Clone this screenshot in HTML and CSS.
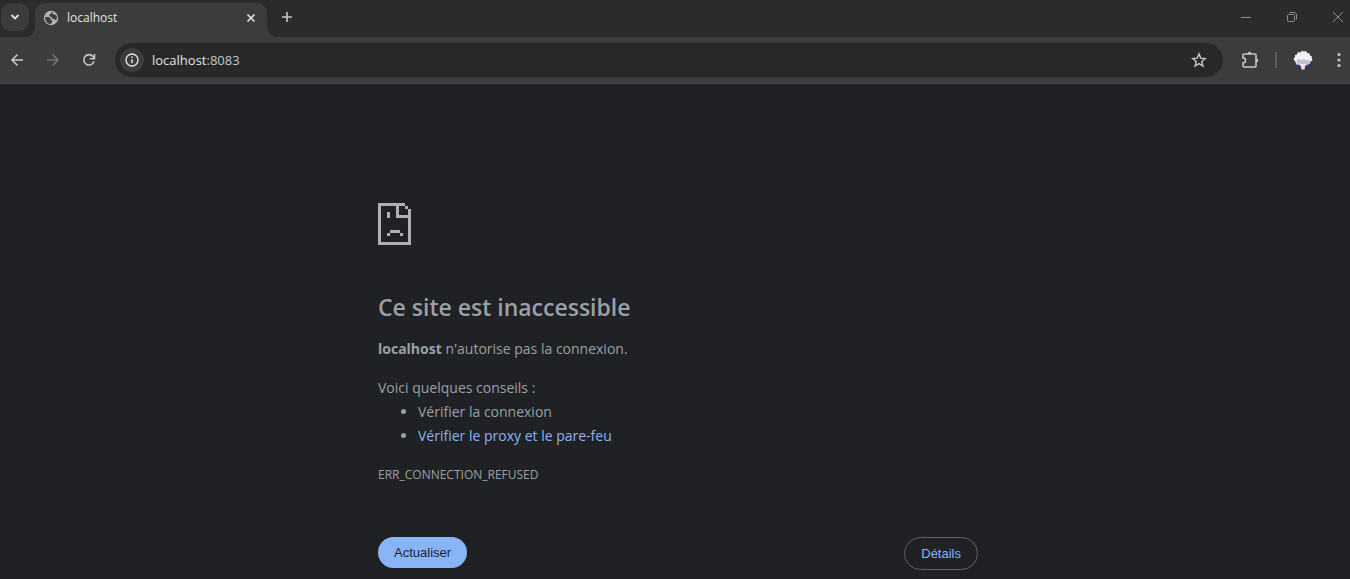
FILE: index.html
```html
<!DOCTYPE html>
<html lang="fr">
<head>
<meta charset="utf-8">
<title>localhost</title>
<link rel="stylesheet" href="styles.css">
</head>
<body>
<header class="browser">
  <div class="tabstrip">
    <button class="tab-search" aria-label="Rechercher dans les onglets"><svg width="10" height="10" viewBox="0 0 10 10"><path d="M1.500 3 5 6.500 8.500 3" fill="none" stroke="currentColor" stroke-width="1.800"/></svg></button>
    <div class="tab">
      <svg class="favicon" width="16" height="16" viewBox="0 0 16 16"><circle cx="8" cy="8" r="7.200" fill="#b4b4b4"/><path d="M2.200 7h3.600l1.800 1.600v1.700h1.700v1.500l-1.600 2.300C4.600 14 2 11.300 2.200 7zM8 2.200l2 .2-.4 1.800 2.200.4 1.800 1.200c.6 2 .3 3.400-.6 4.700L11.300 9H9.500L8.800 7.200 6.500 6.500V4.300L8.200 4z" fill="#3c3c3c"/></svg>
      <span class="tab-title">localhost</span>
      <button class="tab-close" aria-label="Fermer"><svg width="10" height="10" viewBox="0 0 10 10"><path d="m1.500 1.500 7 7m0-7-7 7" stroke="currentColor" stroke-width="1.600"/></svg></button>
    </div>
    <button class="new-tab" aria-label="Nouvel onglet"><svg width="12" height="12" viewBox="0 0 12 12"><path d="M6 1v10M1 6h10" stroke="currentColor" stroke-width="1.600"/></svg></button>
    <div class="window-controls">
      <button aria-label="Réduire"><svg width="12" height="12" viewBox="0 0 12 12"><path d="M1 6.500h10" stroke="currentColor"/></svg></button>
      <button aria-label="Restaurer"><svg width="12" height="12" viewBox="0 0 12 12"><rect x="1.500" y="3.500" width="7" height="7" rx="1" fill="none" stroke="currentColor"/><path d="M3.500 1.500H8A2.500 2.500 0 0 1 10.500 4v4.500" fill="none" stroke="currentColor"/></svg></button>
      <button aria-label="Fermer la fenêtre"><svg width="12" height="12" viewBox="0 0 12 12"><path d="m1 1 10 10M11 1 1 11" stroke="currentColor"/></svg></button>
    </div>
  </div>
  <div class="toolbar">
    <nav class="nav">
      <button aria-label="Précédent"><svg width="14" height="14" viewBox="0 0 14 14"><path d="M13 7H2m5.500-5.500L2 7l5.500 5.500" fill="none" stroke="currentColor" stroke-width="1.600"/></svg></button>
      <button class="dim" aria-label="Suivant"><svg width="14" height="14" viewBox="0 0 14 14"><path d="M1 7h11M6.500 1.500 12 7l-5.500 5.500" fill="none" stroke="currentColor" stroke-width="1.600"/></svg></button>
      <button aria-label="Recharger"><svg width="14" height="14" viewBox="0 0 14 14"><path d="M12 8.300A5.200 5.200 0 1 1 11 3.500L12.500 5M12.500 1v4.700H7.800" fill="none" stroke="currentColor" stroke-width="1.600"/></svg></button>
    </nav>
    <div class="omnibox">
      <button class="site-info" aria-label="Informations sur le site"><svg width="14" height="14" viewBox="0 0 14 14"><circle cx="7" cy="7" r="6" fill="none" stroke="currentColor" stroke-width="1.400"/><path d="M7 6.300v4M7 3.500V5" stroke="currentColor" stroke-width="1.500"/></svg></button>
      <div class="url" role="textbox" aria-label="Adresse">localhost<span class="port">:8083</span></div>
      <button class="star" aria-label="Ajouter aux favoris"><svg width="16" height="16" viewBox="0 0 16 16"><path d="m8 1.800 1.700 4.300 4.600.4-3.500 3 1.100 4.500L8 11.600 4.100 14l1.100-4.500-3.500-3 4.600-.4z" fill="none" stroke="currentColor" stroke-width="1.400"/></svg></button>
    </div>
    <div class="actions">
      <button aria-label="Extensions"><svg width="18" height="18" viewBox="0 0 18 18"><path d="M3 3h11a1 1 0 0 1 1 1v11a1 1 0 0 1-1 1H3a1 1 0 0 1-1-1v-3a2.300 2.300 0 0 0 0-5V4a1 1 0 0 1 1-1z" fill="none" stroke="currentColor" stroke-width="1.600"/><path d="M6.500 2.700a2 2 0 0 1 4 0zM15.300 7.500a2 2 0 0 1 0 4z" fill="currentColor"/></svg></button>
      <span class="divider"></span>
      <button aria-label="Profil"><svg width="20" height="20" viewBox="0 0 20 20"><circle cx="10" cy="10.500" r="9" fill="#33377c"/><path d="m.5 9 1.500-2L2 5l2-.5L5 2l2.500.5L9 .500l2 1.200 2-1L14 3l2.500.2.500 2.300 2 1-.3 2 .8 2-2 1-1 2.500-13 .5-1-2.500z" fill="#f2f2f4"/><path d="M3.500 10.500 6.500 9l2 1.500L11 9l2.500 1.500L16 9.500l1 2.500-1.500 2.500-3 1h-5L4 14z" fill="#c9bdcc"/><path d="m6 13.500 3 .5 4.500-.5-1.500 3-.5 3h-3L8 16.500z" fill="#f5e6e3"/></svg></button>
      <button class="menu" aria-label="Menu"><svg width="4" height="16" viewBox="0 0 4 16" fill="currentColor"><circle cx="2" cy="2.500" r="1.600"/><circle cx="2" cy="8" r="1.600"/><circle cx="2" cy="13.500" r="1.600"/></svg></button>
    </div>
  </div>
</header>
<main class="page">
  <div class="error">
    <svg class="sad" width="33" height="42" viewBox="0 0 11 14" shape-rendering="crispEdges" fill="currentColor"><path d="M0 0h9v1H7v3h4v10H0zM1 1v12h9V5H6V1zM9 1h1v1H9zM10 2h1v2h-1zM3 3h1v2H3zM4 9h3.330v1H4zM3 10h1v1H3zM7.330 10h1v1h-1z" fill-rule="evenodd"/></svg>
    <h1>Ce site est inaccessible</h1>
    <p><strong>localhost</strong> n'autorise pas la connexion.</p>
    <div class="tips">
      <p>Voici quelques conseils :</p>
      <ul>
        <li>Vérifier la connexion</li>
        <li><a href="#proxy">Vérifier le proxy et le pare-feu</a></li>
      </ul>
    </div>
    <div class="code">ERR_CONNECTION_REFUSED</div>
    <div class="buttons">
      <button class="primary">Actualiser</button>
      <button class="secondary">Détails</button>
    </div>
  </div>
</main>
</body>
</html>
```
FILE: styles.css
```css
* { box-sizing: border-box; }
body {
  margin: 0;
  min-height: 100vh;
  background: #202124;
  color: #9aa0a6;
  font-family: "Segoe UI", "Open Sans", "Noto Sans", sans-serif;
  font-size: 14px;
  line-height: 24px;
}
button {
  display: flex;
  align-items: center;
  justify-content: center;
  padding: 0;
  border: 0;
  background: none;
  color: inherit;
}
.browser { color: #c7c7c7; }
.tabstrip {
  display: flex;
  height: 37px;
  background: #2b2b2b;
}
.tab-search {
  width: 28px;
  height: 28px;
  margin: 3px 6px 0 1px;
  border-radius: 10px;
  background: #3c3c3c;
  color: #e3e3e3;
}
.tab {
  position: relative;
  display: flex;
  align-items: center;
  width: 232px;
  margin-top: 3px;
  padding: 0 10px 5px 8px;
  border-radius: 10px 10px 0 0;
  background: #3c3c3c;
}
.tab::before,
.tab::after {
  content: "";
  position: absolute;
  bottom: 0;
  width: 10px;
  height: 10px;
}
.tab::before {
  right: 100%;
  background: radial-gradient(circle at 0 0, #2b2b2b 10px, #3c3c3c 10px);
}
.tab::after {
  left: 100%;
  background: radial-gradient(circle at 100% 0, #2b2b2b 10px, #3c3c3c 10px);
}
.tab-title {
  flex: 1;
  margin-left: 8px;
  color: #e3e3e3;
  font-size: 12px;
  line-height: 16px;
}
.tab-close { width: 12px; height: 16px; color: #e3e3e3; }
.new-tab { width: 28px; height: 28px; margin: 3px 0 0 6px; }
.window-controls {
  display: flex;
  gap: 34px;
  margin-left: auto;
  padding: 11px 6px 0 0;
  height: 23px;
  color: #8c8c8c;
}
.toolbar {
  display: flex;
  align-items: center;
  height: 47px;
  border-bottom: 1px solid #4b4b4b;
  background: #3c3c3c;
}
.nav { display: flex; gap: 22px; padding: 0 19px 0 10px; }
.dim { color: #747474; }
.omnibox {
  display: flex;
  flex: 1;
  align-items: center;
  height: 34px;
  margin-right: 18px;
  padding: 0 16px 0 5px;
  border-radius: 17px;
  background: #282828;
}
.site-info {
  width: 24px;
  height: 24px;
  border-radius: 50%;
  background: #3c3c3c;
  color: #e3e3e3;
}
.url { flex: 1; padding-left: 8px; color: #e3e3e3; font-size: 13px; }
.port { color: #c7c7c7; }
.actions { display: flex; align-items: center; padding-right: 9px; }
.divider { width: 2px; height: 16px; margin: 0 16px; background: #5c5c5c; }
.menu { margin-left: 24px; }
.page { padding: 119px 0 9px 6px; }
.error { width: 600px; max-width: 100%; margin: 0 auto; }
.sad { display: block; color: #b0b0b0; }
h1 {
  margin: 48px 0 16px;
  font-size: 23px;
  font-weight: 600;
  line-height: 28px;
}
p { margin: 0; }
.tips { margin-top: 15px; }
ul { margin: 0; padding-left: 40px; }
a { color: #8ab4f8; text-decoration: none; }
.code { margin-top: 15px; font-size: 12px; }
.buttons {
  display: flex;
  align-items: flex-start;
  justify-content: space-between;
  margin-top: 50px;
}
.buttons button {
  padding: 0 16px;
  border-radius: 17px;
  font-family: "Liberation Sans", Arial, sans-serif;
  font-size: 13px;
}
.primary { height: 31px; background: #8ab4f8; color: #202124; }
.buttons .secondary { height: 33px; border: 1px solid #5f6368; color: #8ab4f8; }
```
